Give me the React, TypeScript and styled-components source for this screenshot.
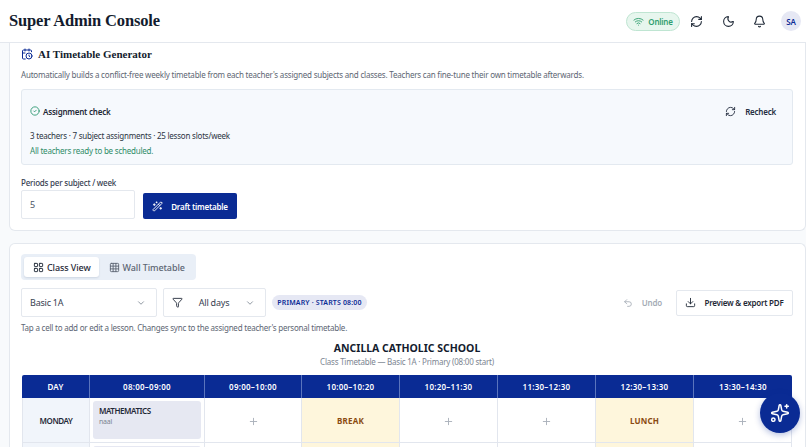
import React from 'react';
import styled, { createGlobalStyle } from 'styled-components';
import {
  Bell, CalendarClock, ChevronDown, CircleCheck, Download, Funnel, Grid3x3, LayoutGrid, Moon, Plus, RefreshCw, Sparkles, Undo2, WandSparkles, Wifi,
} from 'lucide-react';

const NAVY = '#0a2b94';
const SANS = '"Noto Sans", "Open Sans", sans-serif';
const SERIF = '"Liberation Serif", serif';

const periods = ['08:00–09:00', '09:00–10:00', '10:00–10:20', '10:20–11:30', '11:30–12:30', '12:30–13:30', '13:30–14:30'];

function App() {
  return (
    <Page>
      <GlobalStyle />
      <TopBar>
        <Title>Super Admin Console</Title>
        <TopActions>
          <OnlinePill><Wifi size={11} />Online</OnlinePill>
          <IconButton><RefreshCw size={13} /></IconButton>
          <IconButton><Moon size={13} /></IconButton>
          <IconButton><Bell size={13} /></IconButton>
          <Avatar>SA</Avatar>
        </TopActions>
      </TopBar>
      <Main>
        <GeneratorCard>
          <CardTitleRow>
            <CalendarClock size={12} color={NAVY} />
            <CardTitle>AI Timetable Generator</CardTitle>
          </CardTitleRow>
          <Description>
            Automatically builds a conflict-free weekly timetable from each teacher's assigned subjects and classes. Teachers can fine-tune their own timetable afterwards.
          </Description>
          <CheckBox>
            <CheckHeader>
              <CheckLabel><CircleCheck size={10} color="#1f9268" />Assignment check</CheckLabel>
              <RecheckButton><RefreshCw size={11} />Recheck</RecheckButton>
            </CheckHeader>
            <CheckStats>3 teachers · 7 subject assignments · 25 lesson slots/week</CheckStats>
            <CheckOk>All teachers ready to be scheduled.</CheckOk>
          </CheckBox>
          <FieldLabel>Periods per subject / week</FieldLabel>
          <FieldRow>
            <NumberBox>5</NumberBox>
            <PrimaryButton><WandSparkles size={11} />Draft timetable</PrimaryButton>
          </FieldRow>
        </GeneratorCard>

        <TimetableCard>
          <Tabs>
            <Tab $active><LayoutGrid size={11} />Class View</Tab>
            <Tab><Grid3x3 size={11} />Wall Timetable</Tab>
          </Tabs>
          <Controls>
            <Select $width={136}>Basic 1A<ChevronDown size={10} color="#7c8591" /></Select>
            <Select $width={103}>
              <Funnel size={11} color="#283040" />
              All days
              <ChevronDown size={10} color="#7c8591" />
            </Select>
            <LevelPill>PRIMARY · STARTS 08:00</LevelPill>
            <Spacer />
            <UndoButton><Undo2 size={10} />Undo</UndoButton>
            <ExportButton><Download size={11} />Preview &amp; export PDF</ExportButton>
          </Controls>
          <Hint>Tap a cell to add or edit a lesson. Changes sync to the assigned teacher's personal timetable.</Hint>
          <SchoolName>ANCILLA CATHOLIC SCHOOL</SchoolName>
          <SchoolSub>Class Timetable — Basic 1A · Primary (08:00 start)</SchoolSub>
          <Grid>
            <colgroup>
              <col width={68} />
              <col width={115} />
              <col width={97} />
              <col width={98} />
              <col width={98} />
              <col width={98} />
              <col width={98} />
              <col width={98} />
            </colgroup>
            <thead>
              <tr>
                <HeadCell>DAY</HeadCell>
                {periods.map((p) => <HeadCell key={p}>{p}</HeadCell>)}
              </tr>
            </thead>
            <tbody>
              <tr>
                <DayCell>MONDAY</DayCell>
                <SlotCell><Lesson><strong>MATHEMATICS</strong><span>naal</span></Lesson></SlotCell>
                <SlotCell><Plus size={11} /></SlotCell>
                <BreakCell>BREAK</BreakCell>
                <SlotCell><Plus size={11} /></SlotCell>
                <SlotCell><Plus size={11} /></SlotCell>
                <BreakCell>LUNCH</BreakCell>
                <SlotCell><Plus size={11} /></SlotCell>
              </tr>
              <tr>
                <DayCell />
                <SlotCell><Lesson /></SlotCell>
                <SlotCell />
                <BreakCell />
                <SlotCell />
                <SlotCell />
                <BreakCell />
                <SlotCell />
              </tr>
            </tbody>
          </Grid>
        </TimetableCard>
      </Main>
      <Fab><Sparkles size={20} strokeWidth={1.8} /></Fab>
    </Page>
  );
}

const GlobalStyle = createGlobalStyle`
  html, body { margin: 0; height: 100%; overflow: hidden; }
  body { font-family: ${SANS}; letter-spacing: -0.22px; color: #1f2937; background: #f8fafc; }
  * { box-sizing: border-box; }
`;

const Page = styled.div`
  position: relative;
  height: 100vh;
  display: flex;
  flex-direction: column;
  overflow: hidden;
`;

const TopBar = styled.header`
  flex: none;
  height: 43px;
  padding: 0 5px 0 9px;
  display: flex;
  align-items: center;
  justify-content: space-between;
  background: #fff;
  border-bottom: 1px solid #e4e8ee;
`;

const Title = styled.h1`
  margin: 0;
  font: 700 16.5px ${SERIF};
  letter-spacing: -0.15px;
  color: #131c2e;
`;

const TopActions = styled.div`
  display: flex;
  align-items: center;
`;

const OnlinePill = styled.div`
  width: 54px;
  height: 19px;
  margin-right: 1.2px;
  display: flex;
  align-items: center;
  justify-content: center;
  gap: 4px;
  border-radius: 10px;
  border: 1px solid #bfe5d2;
  background: #e7f6ee;
  color: #2f9e6e;
  font-size: 8px;
  font-weight: 600;
`;

const IconButton = styled.button`
  width: 31.5px;
  height: 31px;
  padding: 0;
  display: flex;
  align-items: center;
  justify-content: center;
  border: 0;
  background: none;
  color: #1f2937;
`;

const Avatar = styled.div`
  width: 20px;
  height: 20px;
  margin-left: 5.3px;
  display: flex;
  align-items: center;
  justify-content: center;
  border-radius: 50%;
  background: #e6e8f4;
  color: ${NAVY};
  font-size: 8px;
  font-weight: 600;
`;

const Main = styled.main`
  flex: 1;
  min-height: 0;
  padding-left: 9px;
  overflow: hidden;
`;

const Card = styled.section`
  background: #fff;
  border: 1px solid #e4e8ee;
  padding: 0 12px 0 11px;
`;

const GeneratorCard = styled(Card)`
  height: 188px;
  border-top: 0;
  border-radius: 0 0 6px 6px;
`;

const TimetableCard = styled(Card)`
  margin-top: 12px;
  padding-top: 10px;
  border-bottom: 0;
  border-radius: 6px 6px 0 0;
`;

const CardTitleRow = styled.div`
  height: 22px;
  display: flex;
  align-items: center;
  gap: 5px;
`;

const CardTitle = styled.h2`
  margin: 0;
  font: 700 11px ${SERIF};
  letter-spacing: 0;
  color: #131c2e;
`;

const Description = styled.p`
  margin: 3px 0 0;
  height: 14px;
  font-size: 8px;
  line-height: 14px;
  letter-spacing: -0.2px;
  color: #5d6673;
  white-space: nowrap;
`;

const CheckBox = styled.div`
  margin-top: 7px;
  height: 76px;
  padding: 4px 9px 0 8px;
  border: 1px solid #e3e9f0;
  border-radius: 3px;
  background: #f6f9fd;
`;

const CheckHeader = styled.div`
  height: 34px;
  display: flex;
  align-items: center;
  justify-content: space-between;
`;

const CheckLabel = styled.div`
  display: flex;
  align-items: center;
  gap: 3px;
  font-size: 8px;
  font-weight: 600;
  color: #1f2937;
`;

const RecheckButton = styled.div`
  margin-right: 7px;
  display: flex;
  align-items: center;
  gap: 9px;
  font-size: 8px;
  font-weight: 600;
  color: #262f42;
`;

const CheckStats = styled.div`
  margin-top: 1px;
  font-size: 8px;
  line-height: 13px;
  color: #2b3442;
`;

const CheckOk = styled.div`
  margin-top: 2px;
  font-size: 8px;
  line-height: 13px;
  color: #2f8c68;
`;

const FieldLabel = styled.div`
  margin-top: 11px;
  font-size: 8px;
  line-height: 14px;
  font-weight: 500;
  color: #374151;
`;

const FieldRow = styled.div`
  display: flex;
  align-items: flex-end;
  gap: 8px;
`;

const NumberBox = styled.div`
  width: 114px;
  height: 29px;
  padding: 0 8px;
  display: flex;
  align-items: center;
  background: #fff;
  border: 1px solid #e4e8ee;
  border-radius: 2px;
  font-size: 9px;
  color: #4b5563;
`;

const PrimaryButton = styled.button`
  width: 94px;
  height: 26px;
  padding: 0;
  display: flex;
  align-items: center;
  justify-content: center;
  gap: 8px;
  border: 0;
  border-radius: 2px;
  background: ${NAVY};
  color: #fff;
  font-family: ${SANS};
  font-size: 8px;
  letter-spacing: -0.22px;
  font-weight: 600;
`;

const Tabs = styled.div`
  width: 175px;
  height: 26px;
  padding: 3px;
  display: flex;
  border-radius: 4px;
  background: #e9eff7;
`;

const Tab = styled.div<{ $active?: boolean }>`
  padding: 0 8px 0 ${(p) => (p.$active ? 9 : 10)}px;
  display: flex;
  align-items: center;
  gap: 3px;
  border-radius: 3px;
  font-size: 9px;
  font-weight: 500;
  letter-spacing: -0.1px;
  white-space: nowrap;
  color: ${(p) => (p.$active ? '#1f2937' : '#5d6673')};
  background: ${(p) => (p.$active ? '#fff' : 'transparent')};
  box-shadow: ${(p) => (p.$active ? '0 1px 2px rgba(20,40,80,0.12)' : 'none')};
`;

const Controls = styled.div`
  margin-top: 8px;
  height: 29px;
  display: flex;
  align-items: center;
  gap: 6px;
`;

const Select = styled.div<{ $width: number }>`
  width: ${(p) => p.$width}px;
  height: 29px;
  padding: 0 10px 0 8px;
  display: flex;
  align-items: center;
  justify-content: space-between;
  background: #fff;
  border: 1px solid #e4e8ee;
  border-radius: 2px;
  font-size: 9px;
  color: #374151;
`;

const LevelPill = styled.div`
  width: 95px;
  height: 15px;
  display: flex;
  align-items: center;
  justify-content: center;
  border-radius: 8px;
  background: #e6e8f4;
  color: ${NAVY};
  font-size: 7px;
  font-weight: 600;
  letter-spacing: 0.15px;
  white-space: nowrap;
`;

const Spacer = styled.div`
  flex: 1;
`;

const UndoButton = styled.div`
  margin-right: 8px;
  display: flex;
  align-items: center;
  gap: 9px;
  font-size: 8px;
  font-weight: 600;
  color: #a4abb5;
`;

const ExportButton = styled.div`
  width: 117px;
  height: 26px;
  display: flex;
  align-items: center;
  justify-content: center;
  gap: 8px;
  background: #fff;
  border: 1px solid #e4e8ee;
  border-radius: 2px;
  font-size: 8px;
  font-weight: 600;
  color: #1f2937;
`;

const Hint = styled.p`
  margin: 4px 0 0;
  font-size: 8px;
  line-height: 14px;
  color: #5d6673;
`;

const SchoolName = styled.div`
  margin-top: 6px;
  text-align: center;
  font-size: 10.5px;
  line-height: 14px;
  font-weight: 700;
  letter-spacing: 0;
  color: #131c2e;
`;

const SchoolSub = styled.div`
  text-align: center;
  font-size: 8px;
  line-height: 13px;
  color: #7c8591;
`;

const Grid = styled.table`
  width: 770px;
  margin: 7px 0 0 1px;
  table-layout: fixed;
  border-collapse: separate;
  border-spacing: 0;
`;

const HeadCell = styled.th`
  height: 23px;
  padding: 0;
  background: ${NAVY};
  border-right: 1px solid #5a74bd;
  color: #fff;
  font-size: 8px;
  font-weight: 600;
  letter-spacing: 0.25px;
  &:first-child { border-top-left-radius: 2px; }
  &:last-child { border-right: 0; border-top-right-radius: 2px; }
`;

const BodyCell = styled.td`
  height: 45px;
  padding: 0;
  text-align: center;
  border-right: 1px solid #e2e6ee;
  border-bottom: 1px solid #e2e6ee;
`;

const DayCell = styled(BodyCell)`
  background: #f1f5fb;
  border-left: 1px solid #e2e6ee;
  font-size: 8px;
  font-weight: 600;
  letter-spacing: -0.4px;
  color: #1f2937;
`;

const SlotCell = styled(BodyCell)`
  color: #a9afb9;
  svg { vertical-align: middle; }
`;

const BreakCell = styled(BodyCell)`
  background: #fef6dc;
  color: #8a4a10;
  font-size: 8px;
  font-weight: 700;
  letter-spacing: 0.2px;
`;

const Lesson = styled.div`
  height: 38px;
  margin: 0 3px;
  padding: 4px 6px;
  border-radius: 3px;
  background: #e6e8f2;
  text-align: left;
  strong {
    display: block;
    font-size: 8px;
    line-height: 12px;
    font-weight: 600;
    letter-spacing: -0.45px;
    color: #1f2937;
  }
  span {
    display: block;
    font-size: 7px;
    line-height: 10px;
    color: #7c8591;
  }
`;

const Fab = styled.button`
  position: absolute;
  left: 760px;
  top: 393px;
  width: 40px;
  height: 40px;
  padding: 0;
  display: flex;
  align-items: center;
  justify-content: center;
  border: 0;
  border-radius: 50%;
  background: ${NAVY};
  color: #fff;
  box-shadow: 0 2px 6px rgba(10, 43, 148, 0.3);
`;

export default App;
